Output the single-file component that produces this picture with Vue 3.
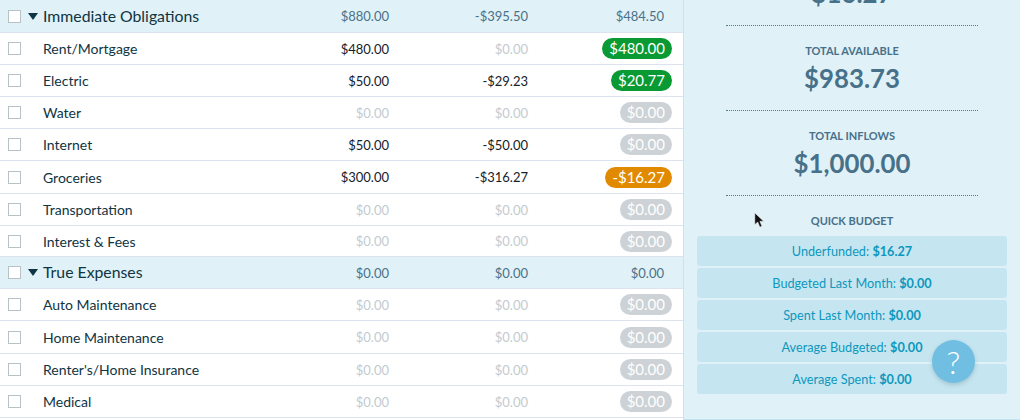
<script setup>
const rows = [
  { name: 'Immediate Obligations', a: '$880.00', b: '-$395.50', c: '$484.50', group: true, size: 'tall' },
  { name: 'Rent/Mortgage', a: '$480.00', b: '$0.00', c: '$480.00', t: 'green', bz: true },
  { name: 'Electric', a: '$50.00', b: '-$29.23', c: '$20.77', t: 'green' },
  { name: 'Water', a: '$0.00', b: '$0.00', c: '$0.00', t: 'gray', az: true, bz: true },
  { name: 'Internet', a: '$50.00', b: '-$50.00', c: '$0.00', t: 'gray' },
  { name: 'Groceries', a: '$300.00', b: '-$316.27', c: '-$16.27', t: 'orange', size: 'tall' },
  { name: 'Transportation', a: '$0.00', b: '$0.00', c: '$0.00', t: 'gray', az: true, bz: true },
  { name: 'Interest & Fees', a: '$0.00', b: '$0.00', c: '$0.00', t: 'gray', az: true, bz: true, size: 'short' },
  { name: 'True Expenses', a: '$0.00', b: '$0.00', c: '$0.00', group: true },
  { name: 'Auto Maintenance', a: '$0.00', b: '$0.00', c: '$0.00', t: 'gray', az: true, bz: true },
  { name: 'Home Maintenance', a: '$0.00', b: '$0.00', c: '$0.00', t: 'gray', az: true, bz: true, size: 'tall' },
  { name: "Renter's/Home Insurance", a: '$0.00', b: '$0.00', c: '$0.00', t: 'gray', az: true, bz: true },
  { name: 'Medical', a: '$0.00', b: '$0.00', c: '$0.00', t: 'gray', az: true, bz: true },
]
const totals = [
  { label: 'TOTAL AVAILABLE', value: '$983.73' },
  { label: 'TOTAL INFLOWS', value: '$1,000.00' },
]
const quick = [
  ['Underfunded:', '$16.27'],
  ['Budgeted Last Month:', '$0.00'],
  ['Spent Last Month:', '$0.00'],
  ['Average Budgeted:', '$0.00'],
  ['Average Spent:', '$0.00'],
]
</script>

<template>
  <div class="page">
    <main class="table">
      <div v-for="r in rows" :key="r.name" class="row" :class="[r.size, { group: r.group }]">
        <span class="check"></span>
        <span class="caret"><i v-if="r.group"></i></span>
        <span class="name">{{ r.name }}</span>
        <span class="num a" :class="{ zero: r.az }">{{ r.a }}</span>
        <span class="num b" :class="{ zero: r.bz }">{{ r.b }}</span>
        <span class="c">
          <span v-if="r.group">{{ r.c }}</span>
          <span v-else class="pill" :class="r.t">{{ r.c }}</span>
        </span>
      </div>
    </main>
    <aside class="side">
      <div class="clipped"><span>$16.27</span></div>
      <section v-for="t in totals" :key="t.label" class="total">
        <div class="label">{{ t.label }}</div>
        <div class="value">{{ t.value }}</div>
      </section>
      <div class="qb-title">QUICK BUDGET</div>
      <div class="qb">
        <div v-for="q in quick" :key="q[0]" class="qb-item">{{ q[0] }} <b>{{ q[1] }}</b></div>
      </div>
      <svg class="cursor" width="10" height="16" viewBox="0 0 12 19">
        <path d="M1 1 L1 15 L4.5 12 L7 18 L9.5 17 L7 11 L11.5 11 Z" fill="#111" stroke="#eee" stroke-width=".6"/>
      </svg>
      <div class="help">?</div>
    </aside>
  </div>
</template>

<style>
html, body { margin: 0; background: #fff; overflow: hidden; }
</style>

<style scoped>
.page {
  display: flex;
  width: 1020px;
  height: 420px;
  overflow: hidden;
  font-family: Lato, "Open Sans", sans-serif;
  color: #0f3442;
}
.table {
  width: 684px;
  box-sizing: border-box;
  flex: none;
  border-right: 1px solid #d6dfe8;
  background: #fff;
}
.row {
  display: flex;
  align-items: center;
  height: 32px;
  box-sizing: border-box;
  border-bottom: 1px solid #dce3ee;
  font-size: 14px;
}
.row.tall { height: 33px; }
.row.short { height: 31px; }
.row.group {
  background: #e0f1f7;
  font-size: 15.8px;
}
.row.group .name { padding-bottom: 2px; }
.row.group .num, .row.group .c { color: #4a7289; font-size: 13px; }
.check {
  width: 11px;
  height: 11px;
  margin-left: 8px;
  border: 1px solid #b7c2c6;
  background: #fff;
  flex: none;
}
.caret { width: 22px; flex: none; display: flex; justify-content: flex-end; padding-right: 5px; box-sizing: border-box; }
.caret i {
  width: 0;
  height: 0;
  border-left: 5px solid transparent;
  border-right: 5px solid transparent;
  border-top: 7px solid #0f3442;
}
.name { width: 250px; flex: none; white-space: nowrap; }
.num { flex: none; text-align: right; font-size: 13px; color: #16222a; }
.num.a { width: 96px; }
.num.b { width: 139px; }
.num.zero { color: #c3cbd0; }
.c { flex: none; width: 144px; text-align: right; font-size: 13px; box-sizing: border-box; }
.row.group .c { padding-right: 8px; }
.pill {
  display: inline-block;
  height: 21px;
  line-height: 21px;
  padding: 0 7px;
  border-radius: 11px;
  color: #fff;
  font-size: 15px;
}
.pill.green { background: #0a9a33; }
.pill.gray { background: #ccd2d5; }
.pill.orange { background: #e18a00; }
.side {
  position: relative;
  flex: 1;
  background: #e0f1f7;
  box-shadow: inset 0 -1px 0 #c3e3ee;
  color: #477089;
  text-align: center;
  padding: 0 13px;
  box-sizing: border-box;
}
.clipped {
  height: 25px;
  margin: 0 29px;
  border-bottom: 1px dotted #4a8197;
  font-size: 25.8px;
  font-weight: 700;
  line-height: 0;
  overflow: hidden;
}
.clipped span { display: block; margin-top: -7px; }
.total {
  margin: 0 29px;
  height: 85px;
  box-sizing: border-box;
  border-bottom: 1px dotted #4a8197;
  padding-top: 18px;
}
.label { font-size: 11px; font-weight: 700; line-height: 14px; }
.value { font-size: 25.8px; font-weight: 700; line-height: 32px; margin-top: 4px; }
.qb-title { font-size: 11px; font-weight: 700; line-height: 14px; margin-top: 18px; }
.qb { margin-top: 8px; display: flex; flex-direction: column; gap: 2px; }
.qb-item {
  height: 30px;
  line-height: 30px;
  background: #c5e6f1;
  border-radius: 3px;
  color: #0e97bd;
  font-size: 12.7px;
}
.qb-item b { font-weight: 700; }
.cursor { position: absolute; left: 70px; top: 212px; }
.help {
  position: absolute;
  left: 248px;
  top: 340px;
  width: 43px;
  height: 43px;
  border-radius: 50%;
  background: #70bfe2;
  color: #fff;
  font-size: 32px;
  font-weight: 300;
  line-height: 43px;
  box-shadow: 0 2px 4px rgba(60, 90, 110, .25);
}
</style>
